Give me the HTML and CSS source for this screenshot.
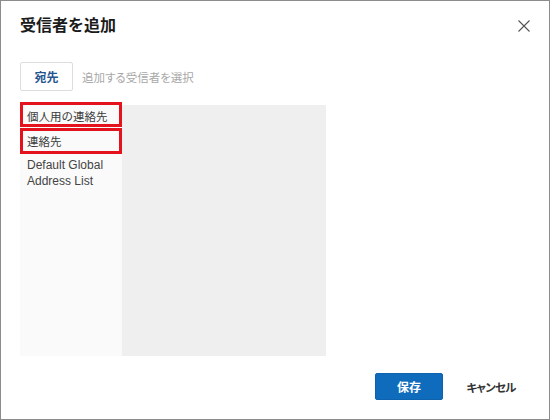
FILE: index.html
```html
<!DOCTYPE html>
<html lang="ja">
<head>
<meta charset="utf-8">
<title>受信者を追加</title>
<link rel="stylesheet" href="styles.css">
</head>
<body>
<div class="dialog">
  <div class="header">
    <h1 class="title">受信者を追加</h1>
    <button class="close" aria-label="閉じる">
      <svg width="12" height="12" viewBox="0 0 12 12"><path d="M0.5 0.5L11.5 11.5M11.5 0.5L0.5 11.5" stroke="#555" stroke-width="1.1" fill="none"/></svg>
    </button>
  </div>
  <div class="to-row">
    <button class="to-btn">宛先</button>
    <span class="placeholder">追加する受信者を選択</span>
  </div>
  <div class="panels">
    <div class="sources">
      <div class="source marked first">個人用の連絡先</div>
      <div class="source marked second">連絡先</div>
      <div class="source plain">Default Global Address List</div>
    </div>
    <div class="results"></div>
  </div>
  <div class="footer">
    <button class="btn primary">保存</button>
    <button class="btn secondary">キャンセル</button>
  </div>
</div>
</body>
</html>
```

FILE: styles.css
```css
html, body {
  margin: 0;
  padding: 0;
  background: #ffffff;
}

body {
  font-family: "Liberation Sans", "Noto Sans CJK JP", sans-serif;
  color: #333333;
}

.dialog {
  box-sizing: border-box;
  width: 550px;
  height: 420px;
  border: 1px solid #8c8c8c;
  padding: 12px 0 0 19px;
  display: flex;
  flex-direction: column;
}

.header {
  display: flex;
  align-items: flex-start;
  justify-content: space-between;
  padding-right: 19px;
}

.title {
  margin: 0;
  font-family: "Noto Sans CJK JP", sans-serif;
  font-size: 16px;
  line-height: 22px;
  font-weight: 700;
  color: #1b1b1b;
}

.close {
  margin: 7px 0 0 0;
  padding: 0;
  border: 0;
  background: transparent;
  width: 12px;
  height: 12px;
  display: flex;
}

.to-row {
  margin-top: 27px;
  display: flex;
  align-items: center;
  gap: 9px;
}

.to-btn {
  box-sizing: border-box;
  width: 53px;
  height: 29px;
  border: 1px solid #dddddd;
  border-radius: 2px;
  background: #ffffff;
  font-family: "Noto Sans CJK JP", sans-serif;
  font-size: 12px;
  font-weight: 700;
  color: #24558f;
  padding: 0;
}

.placeholder {
  font-family: "Noto Sans CJK JP", sans-serif;
  font-size: 11.5px;
  color: #a8a8a8;
  font-feature-settings: "palt" 1;
}

.panels {
  margin-top: 14px;
  display: grid;
  grid-template-columns: 102px 204px;
  height: 251px;
}

.sources {
  background: #fafafa;
  display: flex;
  flex-direction: column;
  margin-top: -3px;
}

.results {
  background: #efefef;
}

.source {
  box-sizing: border-box;
  font-size: 12px;
  color: #3a3a3a;
}

.marked {
  border: 3px solid #e3121d;
  padding: 0 0 0 4px;
  display: flex;
  align-items: center;
  font-family: "Noto Sans CJK JP", sans-serif;
  font-size: 11.5px;
}

.first {
  height: 25px;
  padding-top: 2px;
}

.second {
  height: 26px;
  margin-top: 1px;
}

.plain {
  padding: 3px 6px 0 7px;
  line-height: 16px;
  color: #444444;
}

.footer {
  margin-top: 17px;
  display: flex;
  justify-content: flex-end;
  gap: 14px;
  padding-right: 24px;
}

.btn {
  box-sizing: border-box;
  width: 68px;
  height: 27px;
  border-radius: 2px;
  padding: 0;
  font-family: "Noto Sans CJK JP", sans-serif;
  font-size: 12px;
  font-weight: 700;
  font-feature-settings: "palt" 1;
}

.primary {
  background: #0f6cbd;
  border: 1px solid #0f62ad;
  color: #ffffff;
}

.secondary {
  background: #ffffff;
  border: 0;
  color: #333333;
  font-size: 11.5px;
  letter-spacing: -0.8px;
}
```
